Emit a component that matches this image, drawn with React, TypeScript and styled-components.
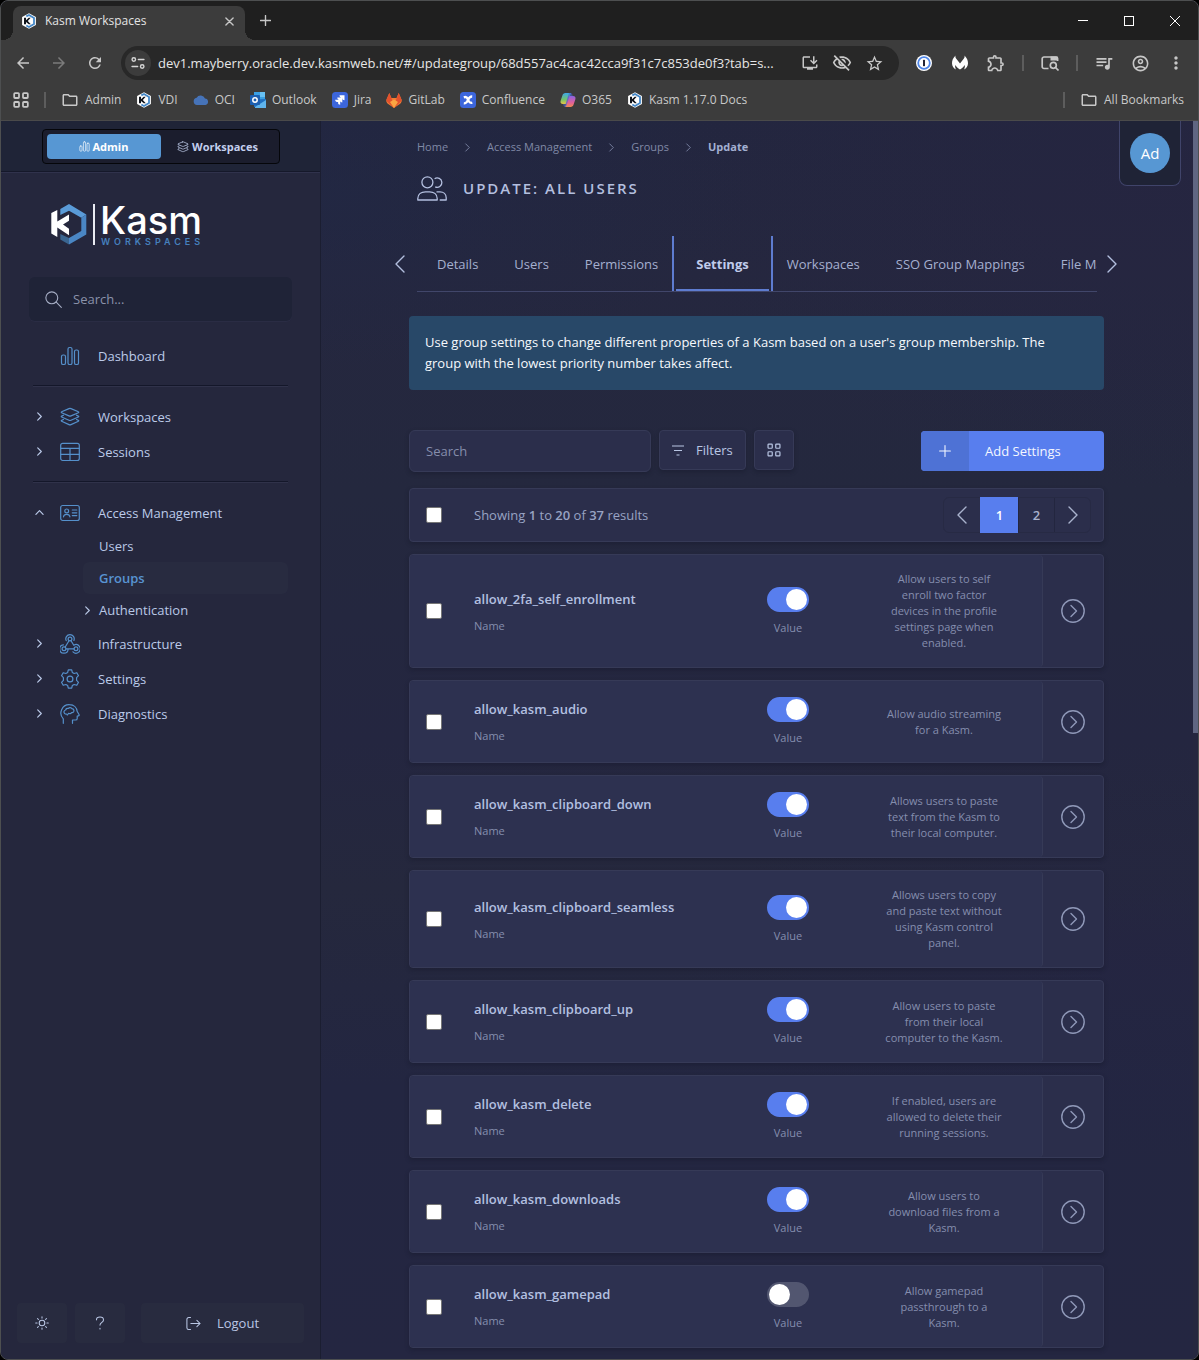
import React, { useState } from "react";
import styled, { createGlobalStyle, css } from "styled-components";
import {
  MdArrowBack,
  MdArrowForward,
  MdRefresh,
  MdOutlineInstallDesktop,
  MdOutlineVisibilityOff,
  MdStarBorder,
  MdOutlineExtension,
  MdOutlineAccountCircle,
  MdMoreVert,
  MdOutlineFolder,
  MdOutlineQueueMusic,
} from "react-icons/md";

const GlobalStyle = createGlobalStyle`
  *, *::before, *::after { box-sizing: border-box; }
  body {
    margin: 0;
    background: #000;
    color: #b9c6e4;
    font-family: "Segoe UI", "Open Sans", "Noto Sans", sans-serif;
    font-size: 13px;
    line-height: 20px;
  }
  button, input {
    font: inherit;
    color: inherit;
    margin: 0;
  }
  button {
    padding: 0;
    border: 0;
    background: none;
    cursor: pointer;
  }
  a { color: inherit; text-decoration: none; }
  b { font-weight: 600; }
  svg { display: block; flex: none; }
`;

/* ---------- Browser window ---------- */

const BrowserWindow = styled.div`
  display: flex;
  flex-direction: column;
  min-height: 100vh;
  border: 1px solid #4d4f50;
  border-radius: 8px;
  overflow: hidden;
  background: #24273d;
`;

const TabStrip = styled.div`
  display: flex;
  align-items: center;
  height: 39px;
  padding-left: 12px;
  background: #1f1f1f;
`;

const BrowserTab = styled.div`
  position: relative;
  display: flex;
  align-items: center;
  align-self: flex-end;
  gap: 8px;
  width: 232px;
  height: 34px;
  padding: 0 9px 4px 8px;
  border-radius: 8px 8px 0 0;
  background: #3c3c3c;
  color: #e3e3e3;
  font-size: 12px;

  &::before,
  &::after {
    content: "";
    position: absolute;
    bottom: 0;
    width: 10px;
    height: 10px;
  }
  &::before {
    right: 100%;
    background: radial-gradient(circle at 0 0, transparent 10px, #3c3c3c 10px);
  }
  &::after {
    left: 100%;
    background: radial-gradient(circle at 100% 0, transparent 10px, #3c3c3c 10px);
  }
`;

const BrowserTabTitle = styled.span`
  flex: 1;
`;

const ChromeButton = styled.button<{ $size?: number; $dim?: boolean }>`
  display: grid;
  place-items: center;
  flex: none;
  width: ${(p) => p.$size ?? 36}px;
  height: ${(p) => p.$size ?? 36}px;
  color: ${(p) => (p.$dim ? "#7b7b7b" : "#c7c7c7")};
`;

const WindowControls = styled.div`
  display: flex;
  margin-left: auto;
  color: #fff;
`;

const WindowControl = styled.button`
  display: grid;
  place-items: center;
  width: 46px;
  height: 38px;
`;

const AddressRow = styled.div`
  display: flex;
  align-items: center;
  height: 46px;
  padding: 0 4px;
  background: #3c3c3c;
`;

const AddressBar = styled.div`
  display: flex;
  align-items: center;
  flex: 1;
  min-width: 0;
  height: 34px;
  margin: 0 7px 0 8px;
  padding: 0 9px 0 4px;
  border-radius: 17px;
  background: #282828;
`;

const SiteInfo = styled.button`
  display: grid;
  place-items: center;
  flex: none;
  width: 26px;
  height: 26px;
  border-radius: 50%;
  background: #3c3c3c;
  color: #d6d6d6;
`;

const AddressInput = styled.input`
  flex: 1;
  min-width: 0;
  padding: 0 0 0 7px;
  border: 0;
  background: none;
  color: #e6e6e6;
  font-size: 13px;
  text-overflow: ellipsis;
`;

const Separator = styled.span<{ $space: number }>`
  flex: none;
  width: 2px;
  height: 16px;
  margin: 0 ${(p) => p.$space}px;
  background: #5d5d5d;
`;

const BookmarkBar = styled.nav`
  display: flex;
  align-items: center;
  gap: 15px;
  height: 35px;
  padding: 0 14px 6px 12px;
  border-bottom: 1px solid #4a4a4a;
  background: #3c3c3c;
  color: #c9c9c9;
  font-size: 12px;
  white-space: nowrap;
`;

const Bookmark = styled.a`
  display: flex;
  align-items: center;
  gap: 6px;
`;

const BookmarkEnd = styled.div`
  display: flex;
  align-items: center;
  gap: 15px;
  margin-left: auto;
`;

/* ---------- Application shell ---------- */

const Shell = styled.div`
  display: grid;
  grid-template-columns: 320px minmax(0, 1fr) 5px;
  flex: 1;
`;

const Sidebar = styled.aside`
  display: flex;
  flex-direction: column;
  border-right: 1px solid #1b1e31;
  background: #25273d;
`;

const ModeBar = styled.div`
  display: flex;
  justify-content: center;
  padding: 8px 0 7px;
  border-bottom: 1px solid #15182a;
  box-shadow: 0 1px 0 #30324c;
  background: #1f2437;
`;

const ModeSwitch = styled.div`
  display: flex;
  width: 238px;
  padding: 4px;
  border: 1px solid #05060a;
  border-radius: 4px;
  background: #1b1d2d;
`;

const ModeButton = styled.button<{ $active?: boolean }>`
  display: flex;
  align-items: center;
  justify-content: center;
  gap: 3px;
  flex: 1;
  height: 25px;
  border-radius: 4px;
  background: ${(p) => (p.$active ? "#5797d3" : "transparent")};
  color: ${(p) => (p.$active ? "#fff" : "#c3cfee")};
  font-size: 11px;
  font-weight: 700;
`;

const Logo = styled.div`
  display: flex;
  align-items: center;
  gap: 6px;
  height: 41px;
  margin: 32px 0 0 50px;
`;

const LogoRule = styled.span`
  width: 2px;
  height: 41px;
  background: #e9ebf2;
`;

const LogoText = styled.div`
  display: flex;
  flex-direction: column;
  color: #fff;
  font-family: Inter, "Open Sans", sans-serif;
`;

const LogoName = styled.span`
  margin-left: -1px;
  font-size: 38px;
  font-weight: 500;
  line-height: 34px;
`;

const LogoSub = styled.span`
  color: #4680bd;
  font-size: 9px;
  font-weight: 600;
  letter-spacing: 4px;
  line-height: 10px;
`;

const SideSearch = styled.label`
  display: flex;
  align-items: center;
  gap: 11px;
  height: 44px;
  margin: 32px 28px 17px;
  padding: 0 16px;
  border-radius: 6px;
  background: #1f2337;
  box-shadow: 0 1px 0 #2a2c44;
  color: #a5adc4;
`;

const SideSearchInput = styled.input`
  flex: 1;
  min-width: 0;
  padding: 0;
  border: 0;
  background: none;
  &::placeholder { color: #8a92aa; opacity: 1; }
`;

const NavList = styled.nav`
  display: flex;
  flex-direction: column;
  padding: 0 32px;
`;

const NavDivider = styled.hr`
  width: 100%;
  height: 2px;
  margin: 12px 0;
  border: 0;
  border-top: 1px solid #14172a;
  border-bottom: 1px solid #30324a;
`;

const NavItem = styled.a`
  display: grid;
  grid-template-columns: 27px 22px 1fr;
  align-items: center;
  height: 35px;
  color: #bccbea;
`;

const NavArrow = styled.span`
  padding-left: 2px;
`;

const NavIcon = styled.span`
  color: #5590cb;
`;

const NavLabel = styled.span`
  padding-left: 16px;
`;

const SubItem = styled.a<{ $active?: boolean }>`
  display: grid;
  grid-template-columns: 16px 1fr;
  align-items: center;
  height: 32px;
  margin-left: 50px;
  border-radius: 6px;
  color: #b9c8e6;
  ${(p) =>
    p.$active &&
    css`
      background: #282b40;
      color: #5894d2;
      font-weight: 600;
    `}
`;

const SideFooter = styled.div`
  display: flex;
  gap: 8px;
  margin-top: auto;
  padding: 16px;
`;

const FooterButton = styled.button<{ $wide?: boolean }>`
  display: flex;
  align-items: center;
  justify-content: center;
  gap: 16px;
  flex: ${(p) => (p.$wide ? "1" : "none")};
  width: 50px;
  height: 40px;
  margin-left: ${(p) => (p.$wide ? 8 : 0)}px;
  border-radius: 4px;
  background: #282b3f;
  color: #b9c6e4;
`;

/* ---------- Main content ---------- */

const Main = styled.main`
  position: relative;
  padding: 16px 89px 10px 88px;
  background:
    radial-gradient(ellipse 50% 14% at 0% 6%, rgba(32, 40, 70, 0.5), transparent),
    radial-gradient(ellipse 60% 24% at 100% 6%, rgba(38, 37, 65, 0.7), transparent),
    radial-gradient(ellipse 60% 16% at 100% 68%, rgba(36, 36, 68, 0.6), transparent),
    linear-gradient(180deg, #23263f 0%, #25273f 12%, #24283e 30%, #242640 50%, #25283d 62%, #232641 78%, #242641 100%);
`;

const UserMenu = styled.div`
  position: absolute;
  top: 0;
  right: 12px;
  padding: 12px 10px;
  border: 1px solid #40446a;
  border-top: 0;
  border-radius: 0 0 8px 8px;
  background: #1f2336;
`;

const Avatar = styled.button`
  display: block;
  width: 40px;
  height: 40px;
  border-radius: 50%;
  background: #5797d3;
  color: #fff;
  font-size: 15px;
`;

const Breadcrumbs = styled.nav`
  display: flex;
  align-items: center;
  gap: 15px;
  padding-left: 8px;
  color: #7f88a8;
  font-size: 11px;
`;

const Crumb = styled.a<{ $current?: boolean }>`
  color: ${(p) => (p.$current ? "#a3b0d2" : "#8089a6")};
  font-weight: ${(p) => (p.$current ? 700 : 400)};
`;

const PageTitle = styled.h1`
  display: flex;
  align-items: center;
  gap: 16px;
  height: 26px;
  margin: 18px 0 35px;
  padding-left: 8px;
  color: #b3bfdf;
  font-size: 15px;
  font-weight: 600;
  letter-spacing: 2px;
`;

const TabRow = styled.div`
  display: grid;
  grid-template-columns: 12px minmax(0, 1fr) 12px;
  align-items: center;
  gap: 10px;
  margin: 0 -15px 0 -14px;
  color: #b3bfdf;
`;

const TabScroller = styled.div`
  display: flex;
  overflow: hidden;
  padding-left: 2px;
  border-bottom: 1px solid #41466a;
  white-space: nowrap;
`;

const Tab = styled.button<{ $active?: boolean }>`
  position: relative;
  flex: none;
  height: 55px;
  padding: 0 18px;
  color: #a5b0d0;
  ${(p) =>
    p.$active &&
    css`
      padding: 0 20px;
      border-top: 2px solid transparent;
      border-bottom: 2px solid #5e7cd0;
      color: #c0ccec;
      font-weight: 700;
      &::after {
        content: "";
        position: absolute;
        inset: -2px -4px;
        border: 0 solid #5e7cd0;
        border-width: 0 2px;
      }
    `}
`;

const Notice = styled.p`
  margin: 24px 0 40px;
  padding: 16px 32px 16px 16px;
  border-radius: 4px;
  background: #284868;
  color: #f6f9fd;
  font-weight: 500;
  line-height: 21px;
`;

const Toolbar = styled.div`
  display: flex;
  align-items: flex-start;
  gap: 8px;
  margin-bottom: 16px;
`;

const panel = css`
  border: 1px solid #363a57;
  border-radius: 4px;
  background: #2b2e4b;
  box-shadow: 0 2px 4px rgba(20, 22, 40, 0.4);
`;

const TableSearch = styled.input`
  ${panel}
  width: 242px;
  height: 42px;
  padding: 0 16px;
  border-radius: 6px;
  &::placeholder { color: #858dab; opacity: 1; }
`;

const ToolButton = styled.button`
  ${panel}
  display: flex;
  align-items: center;
  justify-content: center;
  gap: 12px;
  min-width: 40px;
  height: 40px;
  padding: 0 12px;
  color: #b9c6e4;
`;

const AddButton = styled.button`
  display: flex;
  width: 183px;
  height: 40px;
  margin: 1px 0 0 auto;
  border-radius: 4px;
  overflow: hidden;
  background: #587eee;
  color: #f4f7ff;
  font-weight: 500;
  line-height: 40px;
`;

const AddIcon = styled.span`
  display: grid;
  place-items: center;
  width: 48px;
  height: 40px;
  margin-right: 16px;
  background: #4e72d5;
`;

const ResultBar = styled.div`
  ${panel}
  display: flex;
  align-items: center;
  gap: 32px;
  height: 54px;
  margin-bottom: 12px;
  padding: 0 12px 0 16px;
  color: #98a3c3;
`;

const Check = styled.input`
  appearance: none;
  flex: none;
  width: 16px;
  height: 16px;
  border: 1px solid #767676;
  border-radius: 2px;
  background: #fff;
  &:checked {
    background: #587eee;
  }
`;

const Pager = styled.div`
  display: flex;
  margin-left: auto;
  border: 1px solid #272a44;
  border-radius: 6px;
`;

const PageButton = styled.button<{ $active?: boolean }>`
  display: grid;
  place-items: center;
  width: 36px;
  height: 34px;
  border-left: 1px solid #23263f;
  color: #a9b2cd;
  font-weight: 600;
  &:first-child { border-left: 0; }
  ${(p) =>
    p.$active &&
    css`
      width: 38px;
      height: 36px;
      margin: -1px 0;
      border-color: #587eee;
      background: #587eee;
      color: #fff;
    `}
`;

const SettingList = styled.ul`
  display: flex;
  flex-direction: column;
  gap: 12px;
  margin: 0;
  padding: 0;
  list-style: none;
`;

const SettingCard = styled.li`
  ${panel}
  display: flex;
`;

const SettingBody = styled.div`
  display: grid;
  grid-template-columns: 16px minmax(0, 1fr) 100px 120px;
  align-items: center;
  flex: 1;
  padding: 16px 38px 16px 16px;
  border-right: 1px solid #363a57;
  border-radius: 4px;
  background: #2d3150;
`;

const NameCell = styled.label`
  display: flex;
  flex-direction: column;
  gap: 9px;
  padding-left: 32px;
`;

const SettingName = styled.span`
  color: #b3c0e0;
  font-weight: 600;
`;

const Caption = styled.span`
  color: #858eae;
  font-size: 11px;
  line-height: 16px;
`;

const ValueCell = styled.label`
  display: flex;
  flex-direction: column;
  align-items: center;
  gap: 8px;
  margin: 0 46px 0 -46px;
`;

const Switch = styled.input`
  appearance: none;
  display: block;
  width: 42px;
  height: 25px;
  margin: 0;
  padding: 2px;
  border-radius: 13px;
  background: #525670;
  &::before {
    content: "";
    display: block;
    width: 21px;
    height: 21px;
    border-radius: 50%;
    background: #fff;
  }
  &:checked { background: #587eee; }
  &:checked::before { margin-left: 17px; }
`;

const Description = styled.p`
  margin: 0;
  color: #858eae;
  font-size: 11px;
  line-height: 16px;
  text-align: center;
`;

const DetailButton = styled.button`
  display: grid;
  place-items: center;
  width: 60px;
  color: #8f98b8;
`;

const ScrollTrack = styled.div`
  background: #25273f;
`;

const ScrollThumb = styled.div`
  height: 612px;
  background: #606682;
`;

/* ---------- Drawings ---------- */

type IconProps = { size?: number };

const Line = ({
  size = 20,
  box = 20,
  width = 1.2,
  children,
}: {
  size?: number;
  box?: number;
  width?: number;
  children: React.ReactNode;
}) => (
  <svg
    width={size}
    height={size}
    viewBox={`0 0 ${box} ${box}`}
    fill="none"
    stroke="currentColor"
    strokeWidth={width}
    strokeLinecap="round"
    strokeLinejoin="round"
    aria-hidden="true"
  >
    {children}
  </svg>
);

const ChartIcon = ({ size }: IconProps) => (
  <Line size={size}>
    <rect x="1.5" y="9" width="4" height="9.5" rx="1.6" />
    <rect x="8" y="1.5" width="4" height="17" rx="1.6" />
    <rect x="14.5" y="4" width="4" height="14.5" rx="1.6" />
  </Line>
);

const LayersIcon = ({ size }: IconProps) => (
  <Line size={size}>
    <path d="M9 1.6 1.6 4.8c-.5.2-.5.7 0 .9L9 8.9c.7.3 1.3.3 2 0l7.4-3.2c.5-.2.5-.7 0-.9L11 1.6c-.7-.3-1.3-.3-2 0Z" />
    <path d="m3.5 8.200-1.900.9c-.5.2-.5.7 0 .9L9 13.300c.7.3 1.300.3 2 0l7.400-3.300c.5-.2.5-.7 0-.9l-1.900-.9" />
    <path d="m3.5 12.500-1.900.9c-.5.2-.5.7 0 .9L9 17.600c.7.3 1.300.3 2 0l7.400-3.300c.5-.2.5-.7 0-.9l-1.900-.9" />
  </Line>
);

const TableIcon = () => (
  <Line>
    <rect x=".7" y="1.3" width="18.6" height="17.2" rx="2" />
    <path d="M.7 6.300h18.600M.7 12.300h18.600M10 6.300v12.200" />
  </Line>
);

const IdCardIcon = () => (
  <Line>
    <rect x=".7" y="2.5" width="18.6" height="15" rx="2" />
    <circle cx="6.7" cy="7.9" r="1.9" />
    <path d="M3.500 13.800c.2-1.700 1.400-2.500 3.200-2.500s3 .8 3.200 2.500M12.300 7h4.500M12.300 9.800h4.500M12.300 12.600h4.500" />
  </Line>
);

const WebhookIcon = () => (
  <Line>
    <circle cx="10" cy="5" r="1.9" />
    <circle cx="4" cy="14.8" r="1.9" />
    <circle cx="16" cy="14.8" r="1.9" />
    <path d="M6.200 6.600A4.200 4.200 0 1 1 13.900 6.400M9 6.800 5.200 13M11 6.800l2.800 4.500a4.200 4.200 0 1 1-.8 6.500M6 14.800h8M3.400 10.800a4.200 4.200 0 1 0 4.700 4.400" />
  </Line>
);

const GearIcon = () => (
  <Line>
    <circle cx="10" cy="10" r="2.9" />
    <path d="M8.300.8h3.400l.6 2.600 1.900 1.100 2.600-.8 1.700 3-1.900 1.900v2.800l1.900 1.900-1.700 3-2.600-.8-1.900 1.100-.6 2.600H8.300l-.6-2.600-1.900-1.100-2.600.8-1.700-3 1.900-1.900V8.600L1.500 6.700l1.700-3 2.600.8 1.900-1.100Z" />
  </Line>
);

const BrainIcon = () => (
  <Line>
    <path d="M3.300 19.300v-4.500A8.300 8.300 0 0 1 9.500.7c4.500 0 7.300 3 7.600 6.600l1.900 3.200c.4.700.1 1.200-.6 1.300l-1.200.2v2.400c0 1-.6 1.600-1.600 1.600h-3.100v3.300" />
    <path d="M6.500 10.200C4.700 10 3.800 8.900 4 7.700c.1-1 .8-1.600 1.700-1.700.1-1.200 1.400-2 2.600-1.500C9.300 3.200 11.300 3.400 12 4.700c1.400.1 2.200 1.300 1.900 2.500-.3 1-1.300 1.600-2.300 1.400-.6 1-2 1.400-3 .7l-1.300 1.700" />
  </Line>
);

const SearchIcon = () => (
  <Line size={17} width={1.3}>
    <circle cx="8" cy="8" r="7" />
    <path d="m13.200 13.200 6 6" />
  </Line>
);

const SunIcon = () => (
  <Line size={14} width={1.5}>
    <circle cx="10" cy="10" r="4" />
    <path d="M10 1v2M10 17v2M1 10h2M17 10h2M3.600 3.600 5 5M15 15l1.400 1.400M3.600 16.400 5 15M15 5l1.400-1.400" />
  </Line>
);

const HelpIcon = () => (
  <Line size={14} width={1.5}>
    <path d="M5 5.500C5 3 7 1.500 10 1.500s5 1.600 5 4.200c0 3.300-5 3.500-5 7.300M10 17.500v1" />
  </Line>
);

const LogoutIcon = () => (
  <Line size={15} width={1.4}>
    <path d="M6 2H3.500A2.300 2.300 0 0 0 1.200 4.300v11.400A2.300 2.300 0 0 0 3.500 18H6M6.500 10h12.300M14.500 5.700l4.300 4.300-4.300 4.300" />
  </Line>
);

const UsersIcon = () => (
  <svg width="30" height="25" viewBox="0 0 30 25" fill="none" stroke="currentColor" strokeWidth="1.3" aria-hidden="true">
    <circle cx="10.4" cy="6.3" r="5.5" />
    <path d="M17.600 2.700a4.700 4.700 0 1 1 .6 8.200M.8 24v-1.500c0-4.300 3.500-6.700 7.700-6.700h4c4.200 0 7.700 2.400 7.700 6.700V24ZM19.500 15.800h3.500c3.500 0 6.200 2.300 6.200 5.900V24h-6.500" strokeLinejoin="round" />
  </svg>
);

const Chevron = ({ dir = "right", size = 8, width = 2.4 }: { dir?: "right" | "up"; size?: number; width?: number }) => (
  <Line size={size} width={width}>
    {dir === "right" ? <path d="m6 2 8 8-8 8" /> : <path d="m2 14 8-8 8 8" />}
  </Line>
);

const TallChevron = ({ dir }: { dir: "left" | "right" }) => (
  <svg width="10" height="18" viewBox="0 0 10 18" fill="none" stroke="currentColor" strokeWidth="1.4" strokeLinecap="round" strokeLinejoin="round" aria-hidden="true">
    <path d={dir === "left" ? "M9 1 1 9l8 8" : "m1 1 8 8-8 8"} />
  </svg>
);

const FilterIcon = () => (
  <svg width="12" height="11" viewBox="0 0 12 11" stroke="currentColor" strokeWidth="1.2" aria-hidden="true">
    <path d="M0 1h12M2 5.500h8M4.500 10h3" />
  </svg>
);

const GridIcon = ({ size = 14, width = 1.7 }: { size?: number; width?: number }) => (
  <Line size={size} width={width}>
    <rect x="1.5" y="1.5" width="6" height="6" rx="1" />
    <rect x="12.5" y="1.5" width="6" height="6" rx="1" />
    <rect x="1.5" y="12.5" width="6" height="6" rx="1" />
    <rect x="12.5" y="12.5" width="6" height="6" rx="1" />
  </Line>
);

const PlusIcon = ({ size = 12, width = 1.8 }: { size?: number; width?: number }) => (
  <Line size={size} width={width}>
    <path d="M10 1v18M1 10h18" />
  </Line>
);

const DetailIcon = () => (
  <Line size={24} box={24} width={1.4}>
    <circle cx="12" cy="12" r="11.2" />
    <path d="m10 6.500 5.500 5.500-5.500 5.500" />
  </Line>
);

const KasmMark = () => (
  <svg width="36" height="41" viewBox="0 0 36 41" aria-hidden="true">
    <path d="M9.300 5 18 0l17.300 10.500-5 3.200L18 6.700 9.300 11Z" fill="#5a9bd8" />
    <path d="M35.300 10.500v20L18 40.500V34l12.300-7V13.700Z" fill="#4a86c4" />
    <path d="M9.300 30 18 34v6.500l-8.700-5Z" fill="#3a6590" />
    <path d="M.3 9 6.300 6v11.500L18 10.500v6.300l-6 3.700 6 4.300v6.500L6.300 23.500V33L.3 29.500Z" fill="#fff" />
  </svg>
);

const KasmFavicon = () => (
  <svg width="16" height="16" viewBox="0 0 16 16" aria-hidden="true">
    <path d="m8 .2 6.900 3.900v7.800L8 15.800 1.100 11.900V4.100Z" fill="#fff" />
    <path d="M5.300 3.400 8 2l5 2.900v6.200L8 14l-2.700-1.500" fill="none" stroke="#4588c8" strokeWidth="1.8" />
    <path d="M3 4.800h2v2.400l2.700-2.400h2L6.800 8l3 3.300h-2L5 8.900v2.400H3Z" fill="#10151d" />
  </svg>
);

const CloudIcon = () => (
  <svg width="16" height="16" viewBox="0 0 16 16" aria-hidden="true">
    <path d="M4 13a3.700 3.700 0 0 1-.4-7.300A4.700 4.700 0 0 1 12 6.500 3.300 3.300 0 0 1 12.500 13Z" fill="#4673b8" />
  </svg>
);

const OutlookIcon = () => (
  <svg width="16" height="16" viewBox="0 0 16 16" aria-hidden="true">
    <path d="M4 0h11v8H4Z" fill="#3aa0e4" />
    <path d="M10 0h5v5h-5Z" fill="#67c1f4" />
    <path d="M4 7.500 16 7v8H4Z" fill="#1f6fc0" />
    <path d="m5 15 11-7v8H5Z" fill="#5fb4ec" />
    <rect y="3" width="10" height="10" rx="1" fill="#1c5fb0" />
    <circle cx="5" cy="8" r="2.2" fill="none" stroke="#fff" strokeWidth="1.5" />
  </svg>
);

const JiraIcon = () => (
  <svg width="16" height="16" viewBox="0 0 16 16" aria-hidden="true">
    <rect width="16" height="16" rx="3.5" fill="#3c66dc" />
    <path d="M7.500 3.300h5v5c-1.400 0-2.100-.8-2.100-1.700V5.500H9.300C8.200 5.500 7.500 4.600 7.500 3.300ZM5.300 5.500h5v5c-1.400 0-2.100-.8-2.100-1.700V7.700H7.100c-1.100 0-1.800-.9-1.800-2.200ZM3.200 7.700h5v5c-1.400 0-2.100-.8-2.100-1.700V9.900H5C3.900 9.900 3.200 9 3.200 7.700Z" fill="#fff" />
  </svg>
);

const GitLabIcon = () => (
  <svg width="16" height="16" viewBox="0 0 16 16" aria-hidden="true">
    <path d="M3.300 1 5.400 6h5.200l2.100-5 2.800 6.600c.5 1.600 0 3.200-1.300 4.200L8 16l-6.200-4.200C.5 10.800 0 9.200.5 7.600Z" fill="#ef7b35" />
    <path d="M3.300 1 5.400 6 8 15.900.5 9V7.600ZM12.700 1l-2.100 5L8 15.900 15.500 9V7.600Z" fill="#e2512d" />
    <path d="m4 10 4-2.500L12 10l-4 6Z" fill="#fba642" />
  </svg>
);

const ConfluenceIcon = () => (
  <svg width="16" height="16" viewBox="0 0 16 16" aria-hidden="true">
    <rect width="16" height="16" rx="3.5" fill="#3c66dc" />
    <path d="M3.800 5.300C7.500 4 7.500 7 8.300 8.300s1.200 3.300 4 2.300M12.200 4.500C9.500 4.300 9 6 8 8s-1.700 3.600-4.200 3.400" fill="none" stroke="#fff" strokeWidth="2.3" />
  </svg>
);

const CopilotIcon = () => (
  <svg width="16" height="16" viewBox="0 0 16 16" aria-hidden="true">
    <defs>
      <linearGradient id="copilotLeft" x1="0" y1="0" x2="0" y2="1">
        <stop offset="0" stopColor="#3fa6e8" />
        <stop offset=".6" stopColor="#73c46a" />
        <stop offset="1" stopColor="#e8c544" />
      </linearGradient>
      <linearGradient id="copilotRight" x1="0" y1="0" x2="0" y2="1">
        <stop offset="0" stopColor="#8a63e0" />
        <stop offset=".6" stopColor="#e0609a" />
        <stop offset="1" stopColor="#f0894f" />
      </linearGradient>
    </defs>
    <path d="M5.500 1H11L7.500 12H3C.8 12 0 10.500.7 8.500l1.600-4.700C2.900 2 3.800 1 5.500 1Z" fill="url(#copilotLeft)" />
    <path d="M8.500 4H13c2.200 0 3 1.500 2.300 3.500l-1.600 4.700c-.6 1.800-1.500 2.800-3.200 2.800H5Z" fill="url(#copilotRight)" />
    <path d="M9 1h1.500c1 0 1.500.7 1.800 1.500l.5 1.500H9.500L7 12l-.5 1.500c-.3.900-.8 1.500-1.500 1.500-.8 0-1.200-.7-1.500-1.500L3 12h2.500Z" fill="#3f62c8" opacity=".6" />
  </svg>
);

const SiteInfoIcon = () => (
  <Line size={14} width={2}>
    <circle cx="4" cy="5" r="2.5" />
    <path d="M10.500 5h8M1.500 15h8" />
    <circle cx="16" cy="15" r="2.5" />
  </Line>
);

const PasswordIcon = () => (
  <svg width="16" height="16" viewBox="0 0 16 16" aria-hidden="true">
    <circle cx="8" cy="8" r="8" fill="#fff" />
    <circle cx="8" cy="8" r="5.8" fill="#fff" stroke="#4f86e8" strokeWidth="1.8" />
    <rect x="7" y="4.8" width="2" height="6.4" rx=".6" fill="#223" />
  </svg>
);

const WingsIcon = () => (
  <svg width="16" height="16" viewBox="0 0 16 16" aria-hidden="true">
    <path d="M3.500.5C1 3 0 5.500 0 8.300c0 2.800 1.600 5 4 6.300-.8-1.600-1-3-.8-4.600 1.300 1.800 2.500 3.300 4.800 4.600 2.300-1.300 3.500-2.800 4.800-4.600.2 1.600 0 3-.8 4.600 2.400-1.300 4-3.500 4-6.300 0-2.800-1-5.300-3.500-7.800.3 1.200 0 2.300-.8 3.200L8 8.500 4.300 3.700C3.500 2.800 3.200 1.700 3.500.5Z" fill="#fff" />
  </svg>
);

const TabSearchIcon = () => (
  <svg width="18" height="16" viewBox="0 0 18 16" fill="none" stroke="currentColor" strokeWidth="1.7" aria-hidden="true">
    <path d="M7.500 13.500H3A1.800 1.800 0 0 1 1.200 11.700V3.800A1.800 1.800 0 0 1 3 2h12a1.600 1.600 0 0 1 1.600 1.600V6" />
    <path d="M9.500 1.500h7v4h-7Z" fill="currentColor" stroke="none" />
    <circle cx="12.3" cy="10.3" r="3" />
    <path d="m14.500 12.500 3 3" />
  </svg>
);

/* ---------- Data ---------- */

const bookmarks: { label: string; icon: React.ReactNode }[] = [
  { label: "Admin", icon: <MdOutlineFolder size={18} /> },
  { label: "VDI", icon: <KasmFavicon /> },
  { label: "OCI", icon: <CloudIcon /> },
  { label: "Outlook", icon: <OutlookIcon /> },
  { label: "Jira", icon: <JiraIcon /> },
  { label: "GitLab", icon: <GitLabIcon /> },
  { label: "Confluence", icon: <ConfluenceIcon /> },
  { label: "O365", icon: <CopilotIcon /> },
  { label: "Kasm 1.17.0 Docs", icon: <KasmFavicon /> },
];

const tabs = ["Details", "Users", "Permissions", "Settings", "Workspaces", "SSO Group Mappings", "File Mappings"];

const settings = [
  { name: "allow_2fa_self_enrollment", on: true, text: "Allow users to self enroll two factor devices in the profile settings page when enabled." },
  { name: "allow_kasm_audio", on: true, text: "Allow audio streaming for a Kasm." },
  { name: "allow_kasm_clipboard_down", on: true, text: "Allows users to paste text from the Kasm to their local computer." },
  { name: "allow_kasm_clipboard_seamless", on: true, text: "Allows users to copy and paste text without using Kasm control panel." },
  { name: "allow_kasm_clipboard_up", on: true, text: "Allow users to paste from their local computer to the Kasm." },
  { name: "allow_kasm_delete", on: true, text: "If enabled, users are allowed to delete their running sessions." },
  { name: "allow_kasm_downloads", on: true, text: "Allow users to download files from a Kasm." },
  { name: "allow_kasm_gamepad", on: false, text: "Allow gamepad passthrough to a Kasm." },
];

/* ---------- Parts ---------- */

const Nav = ({ icon, label, open, leaf }: { icon: React.ReactNode; label: string; open?: boolean; leaf?: boolean }) => (
  <NavItem href="#">
    <NavArrow>{!leaf && <Chevron dir={open ? "up" : "right"} size={9} width={2.6} />}</NavArrow>
    <NavIcon>{icon}</NavIcon>
    <NavLabel>{label}</NavLabel>
  </NavItem>
);

const BrowserChrome = () => (
  <header>
    <TabStrip>
      <BrowserTab>
        <KasmFavicon />
        <BrowserTabTitle>Kasm Workspaces</BrowserTabTitle>
        <ChromeButton $size={14} aria-label="Close tab">
          <Line size={9} width={3}>
            <path d="m2 2 16 16M18 2 2 18" />
          </Line>
        </ChromeButton>
      </BrowserTab>
      <ChromeButton $size={40} aria-label="New tab">
        <PlusIcon size={11} width={2.5} />
      </ChromeButton>
      <WindowControls>
        <WindowControl aria-label="Minimize">
          <svg width="10" height="10" viewBox="0 0 10 10" stroke="currentColor"><path d="M0 4.500h10" /></svg>
        </WindowControl>
        <WindowControl aria-label="Maximize">
          <svg width="10" height="10" viewBox="0 0 10 10" stroke="currentColor" fill="none"><rect x=".5" y=".5" width="9" height="9" /></svg>
        </WindowControl>
        <WindowControl aria-label="Close">
          <svg width="10" height="10" viewBox="0 0 10 10" stroke="currentColor"><path d="m0 0 10 10M10 0 0 10" /></svg>
        </WindowControl>
      </WindowControls>
    </TabStrip>
    <AddressRow>
      <ChromeButton aria-label="Back"><MdArrowBack size={18} /></ChromeButton>
      <ChromeButton $dim aria-label="Forward"><MdArrowForward size={18} /></ChromeButton>
      <ChromeButton aria-label="Reload"><MdRefresh size={18} /></ChromeButton>
      <AddressBar>
        <SiteInfo aria-label="Site information"><SiteInfoIcon /></SiteInfo>
        <AddressInput
          aria-label="Address"
          defaultValue="dev1.mayberry.oracle.dev.kasmweb.net/#/updategroup/68d557ac4cac42cca9f31c7c853de0f3?tab=s..."
        />
        <ChromeButton $size={32} aria-label="Install app"><MdOutlineInstallDesktop size={18} /></ChromeButton>
        <ChromeButton $size={32} aria-label="Tracking protection"><MdOutlineVisibilityOff size={20} /></ChromeButton>
        <ChromeButton $size={32} aria-label="Bookmark this page"><MdStarBorder size={19} /></ChromeButton>
      </AddressBar>
      <ChromeButton aria-label="Password manager"><PasswordIcon /></ChromeButton>
      <ChromeButton aria-label="Browser guard"><WingsIcon /></ChromeButton>
      <ChromeButton aria-label="Extensions"><MdOutlineExtension size={20} /></ChromeButton>
      <Separator $space={8} />
      <ChromeButton aria-label="Search tabs"><TabSearchIcon /></ChromeButton>
      <Separator $space={8} />
      <ChromeButton aria-label="Media"><MdOutlineQueueMusic size={20} /></ChromeButton>
      <ChromeButton aria-label="Profile"><MdOutlineAccountCircle size={19} /></ChromeButton>
      <ChromeButton aria-label="Menu"><MdMoreVert size={20} /></ChromeButton>
    </AddressRow>
    <BookmarkBar aria-label="Bookmarks">
      <ChromeButton $size={16} aria-label="Apps"><GridIcon size={16} width={2.2} /></ChromeButton>
      <Separator $space={0} />
      {bookmarks.map((b) => (
        <Bookmark href="#" key={b.label}>
          {b.icon}
          {b.label}
        </Bookmark>
      ))}
      <BookmarkEnd>
        <Separator $space={0} />
        <Bookmark href="#">
          <MdOutlineFolder size={18} />
          All Bookmarks
        </Bookmark>
      </BookmarkEnd>
    </BookmarkBar>
  </header>
);

const SidePanel = () => (
  <Sidebar>
    <ModeBar>
      <ModeSwitch>
        <ModeButton $active><ChartIcon size={11} />Admin</ModeButton>
        <ModeButton><LayersIcon size={12} />Workspaces</ModeButton>
      </ModeSwitch>
    </ModeBar>
    <Logo>
      <KasmMark />
      <LogoRule />
      <LogoText>
        <LogoName>Kasm</LogoName>
        <LogoSub>WORKSPACES</LogoSub>
      </LogoText>
    </Logo>
    <SideSearch>
      <SearchIcon />
      <SideSearchInput aria-label="Search navigation" placeholder="Search..." />
    </SideSearch>
    <NavList>
      <Nav leaf icon={<ChartIcon />} label="Dashboard" />
      <NavDivider />
      <Nav icon={<LayersIcon />} label="Workspaces" />
      <Nav icon={<TableIcon />} label="Sessions" />
      <NavDivider />
      <Nav open icon={<IdCardIcon />} label="Access Management" />
      <SubItem href="#"><span />Users</SubItem>
      <SubItem href="#" $active><span />Groups</SubItem>
      <SubItem href="#"><Chevron size={9} width={2.6} />Authentication</SubItem>
      <Nav icon={<WebhookIcon />} label="Infrastructure" />
      <Nav icon={<GearIcon />} label="Settings" />
      <Nav icon={<BrainIcon />} label="Diagnostics" />
    </NavList>
    <SideFooter>
      <FooterButton aria-label="Theme"><SunIcon /></FooterButton>
      <FooterButton aria-label="Help"><HelpIcon /></FooterButton>
      <FooterButton $wide><LogoutIcon />Logout</FooterButton>
    </SideFooter>
  </Sidebar>
);

const Setting = ({ name, on, text }: { name: string; on: boolean; text: string }) => {
  const [enabled, setEnabled] = useState(on);
  return (
    <SettingCard>
      <SettingBody>
        <Check type="checkbox" id={name} />
        <NameCell htmlFor={name}>
          <SettingName>{name}</SettingName>
          <Caption>Name</Caption>
        </NameCell>
        <ValueCell>
          <Switch type="checkbox" role="switch" checked={enabled} onChange={() => setEnabled(!enabled)} />
          <Caption>Value</Caption>
        </ValueCell>
        <Description>{text}</Description>
      </SettingBody>
      <DetailButton aria-label={`Open ${name}`}><DetailIcon /></DetailButton>
    </SettingCard>
  );
};

export default function App() {
  return (
    <>
      <GlobalStyle />
      <BrowserWindow>
        <BrowserChrome />
        <Shell>
          <SidePanel />
          <Main>
            <UserMenu>
              <Avatar>Ad</Avatar>
            </UserMenu>
            <Breadcrumbs aria-label="Breadcrumb">
              <Crumb href="#">Home</Crumb>
              <Chevron size={9} width={2} />
              <Crumb href="#">Access Management</Crumb>
              <Chevron size={9} width={2} />
              <Crumb href="#">Groups</Crumb>
              <Chevron size={9} width={2} />
              <Crumb href="#" $current>Update</Crumb>
            </Breadcrumbs>
            <PageTitle><UsersIcon />UPDATE: ALL USERS</PageTitle>
            <TabRow>
              <button aria-label="Scroll tabs left"><TallChevron dir="left" /></button>
              <TabScroller role="tablist">
                {tabs.map((t) => (
                  <Tab key={t} role="tab" $active={t === "Settings"} aria-selected={t === "Settings"}>
                    {t}
                  </Tab>
                ))}
              </TabScroller>
              <button aria-label="Scroll tabs right"><TallChevron dir="right" /></button>
            </TabRow>
            <Notice>
              Use group settings to change different properties of a Kasm based on a user's group membership. The
              group with the lowest priority number takes affect.
            </Notice>
            <Toolbar>
              <TableSearch aria-label="Search settings" placeholder="Search" />
              <ToolButton><FilterIcon />Filters</ToolButton>
              <ToolButton aria-label="Grid view"><GridIcon /></ToolButton>
              <AddButton><AddIcon><PlusIcon /></AddIcon>Add Settings</AddButton>
            </Toolbar>
            <ResultBar>
              <Check type="checkbox" aria-label="Select all" />
              <span>Showing <b>1</b> to <b>20</b> of <b>37</b> results</span>
              <Pager>
                <PageButton aria-label="Previous page"><TallChevron dir="left" /></PageButton>
                <PageButton $active>1</PageButton>
                <PageButton>2</PageButton>
                <PageButton aria-label="Next page"><TallChevron dir="right" /></PageButton>
              </Pager>
            </ResultBar>
            <SettingList>
              {settings.map((s) => (
                <Setting key={s.name} {...s} />
              ))}
            </SettingList>
          </Main>
          <ScrollTrack><ScrollThumb /></ScrollTrack>
        </Shell>
      </BrowserWindow>
    </>
  );
}
